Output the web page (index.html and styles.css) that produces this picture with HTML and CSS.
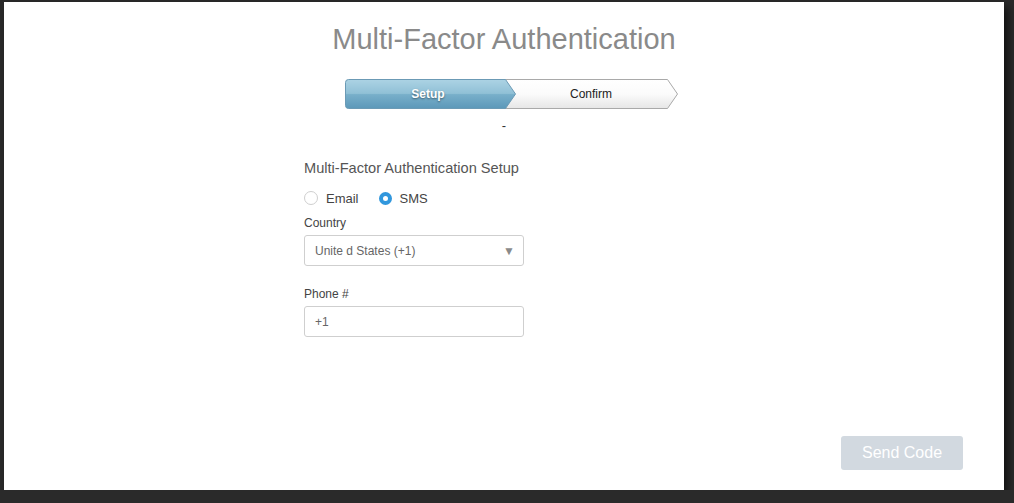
FILE: index.html
```html
<!DOCTYPE html>
<html lang="en">
<head>
    <meta charset="UTF-8">
    <title>Multi-Factor Authentication</title>
    <link rel="stylesheet" href="styles.css">
</head>
<body>
    <div class="card">
        <h1 class="title">Multi-Factor Authentication</h1>

        <div class="stepper">
            <svg class="stepper-bg" width="334" height="31" viewBox="0 0 334 31">
                <defs>
                    <linearGradient id="gWhite" x1="0" y1="0" x2="0" y2="1">
                        <stop offset="0" stop-color="#ffffff"/>
                        <stop offset="0.5" stop-color="#fbfbfb"/>
                        <stop offset="1" stop-color="#e6e6e6"/>
                    </linearGradient>
                    <linearGradient id="gBlue" x1="0" y1="0" x2="0" y2="1">
                        <stop offset="0" stop-color="#acd3e4"/>
                        <stop offset="0.48" stop-color="#90c0d6"/>
                        <stop offset="0.52" stop-color="#78afca"/>
                        <stop offset="1" stop-color="#5c98b9"/>
                    </linearGradient>
                </defs>
                <path d="M150 0.5 H322.5 L332.5 15 L322.5 29.5 H150 Z" fill="url(#gWhite)" stroke="#a9a9a9"/>
                <path d="M3.5 0.5 H160.5 L170.5 15 L160.5 29.5 H3.5 Q0.5 29.5 0.5 26.5 V3.5 Q0.5 0.5 3.5 0.5 Z" fill="url(#gBlue)" stroke="#6b9ab5"/>
            </svg>
            <div class="step step-active">Setup</div>
            <div class="step">Confirm</div>
        </div>

        <div class="dash">-</div>

        <div class="form">
            <h2 class="form-title">Multi-Factor Authentication Setup</h2>

            <div class="radio-row">
                <label class="radio"><span class="radio-dot"></span>Email</label>
                <label class="radio"><span class="radio-dot checked"></span>SMS</label>
            </div>

            <div class="field">
                <label class="field-label">Country</label>
                <div class="select">
                    <span>Unite d States (+1)</span>
                    <span class="select-arrow">&#9660;</span>
                </div>
            </div>

            <div class="field">
                <label class="field-label">Phone #</label>
                <div class="input">+1</div>
            </div>
        </div>

        <button class="send-btn">Send Code</button>
    </div>
</body>
</html>
```

FILE: styles.css
```css
body {
    margin: 0;
    background-color: #2a2a2a;
    font-family: "Liberation Sans", Arial, sans-serif;
}
.card {
    width: 1000px;
    height: 488px;
    margin: 2px 0 0 4px;
    background-color: #fff;
    box-shadow: 4px 5px 8px rgba(0, 0, 0, 0.6);
    display: flex;
    flex-direction: column;
    box-sizing: border-box;
    padding-top: 21px;
}
.title {
    margin: 0;
    text-align: center;
    font-size: 29px;
    font-weight: normal;
    line-height: 32px;
    color: #8a8a8a;
}
.stepper {
    position: relative;
    width: 334px;
    height: 31px;
    margin: 24px 0 0 341px;
    display: flex;
}
.stepper-bg {
    position: absolute;
    left: 0;
    top: 0;
}
.step {
    position: relative;
    height: 30px;
    line-height: 30px;
    font-size: 12px;
    text-align: center;
    color: #222;
}
.step-active {
    width: 166px;
    color: #fff;
    font-weight: bold;
    text-shadow: 0 1px 2px rgba(0, 0, 0, 0.45);
}
.step-active + .step {
    width: 160px;
}
.dash {
    text-align: center;
    font-size: 13px;
    line-height: 14px;
    color: #333;
    margin-top: 9px;
}
.form {
    width: 220px;
    margin: 26px 0 0 300px;
}
.form-title {
    margin: 0 0 12px;
    font-size: 14.6px;
    font-weight: normal;
    line-height: 18px;
    color: #555;
}
.radio-row {
    display: flex;
    gap: 20px;
    height: 18px;
    align-items: center;
    margin-bottom: 8px;
}
.radio {
    display: flex;
    align-items: center;
    gap: 8px;
    font-size: 13px;
    color: #444;
}
.radio-dot {
    width: 12px;
    height: 12px;
    border: 1px solid #cfcfcf;
    border-radius: 50%;
    box-sizing: content-box;
}
.radio-dot.checked {
    width: 5px;
    height: 5px;
    background-color: #fff;
    border: 4.5px solid #3197dd;
}
.field {
    margin-bottom: 20px;
}
.field-label {
    display: block;
    font-size: 12px;
    line-height: 16px;
    color: #444;
    margin-bottom: 4px;
}
.select, .input {
    height: 31px;
    border: 1px solid #cfcfcf;
    border-radius: 3px;
    box-sizing: border-box;
    padding: 0 10px;
    font-size: 12px;
    color: #666;
    display: flex;
    align-items: center;
    justify-content: space-between;
}
.select-arrow {
    font-size: 12px;
    color: #8a8a8a;
    margin-right: -2px;
}
.send-btn {
    margin: auto 41px 20px 0;
    align-self: flex-end;
    width: 122px;
    height: 34px;
    border: none;
    border-radius: 3px;
    background-color: #d2d9e0;
    color: #fff;
    font-family: "Liberation Sans", Arial, sans-serif;
    font-size: 16px;
}
```
